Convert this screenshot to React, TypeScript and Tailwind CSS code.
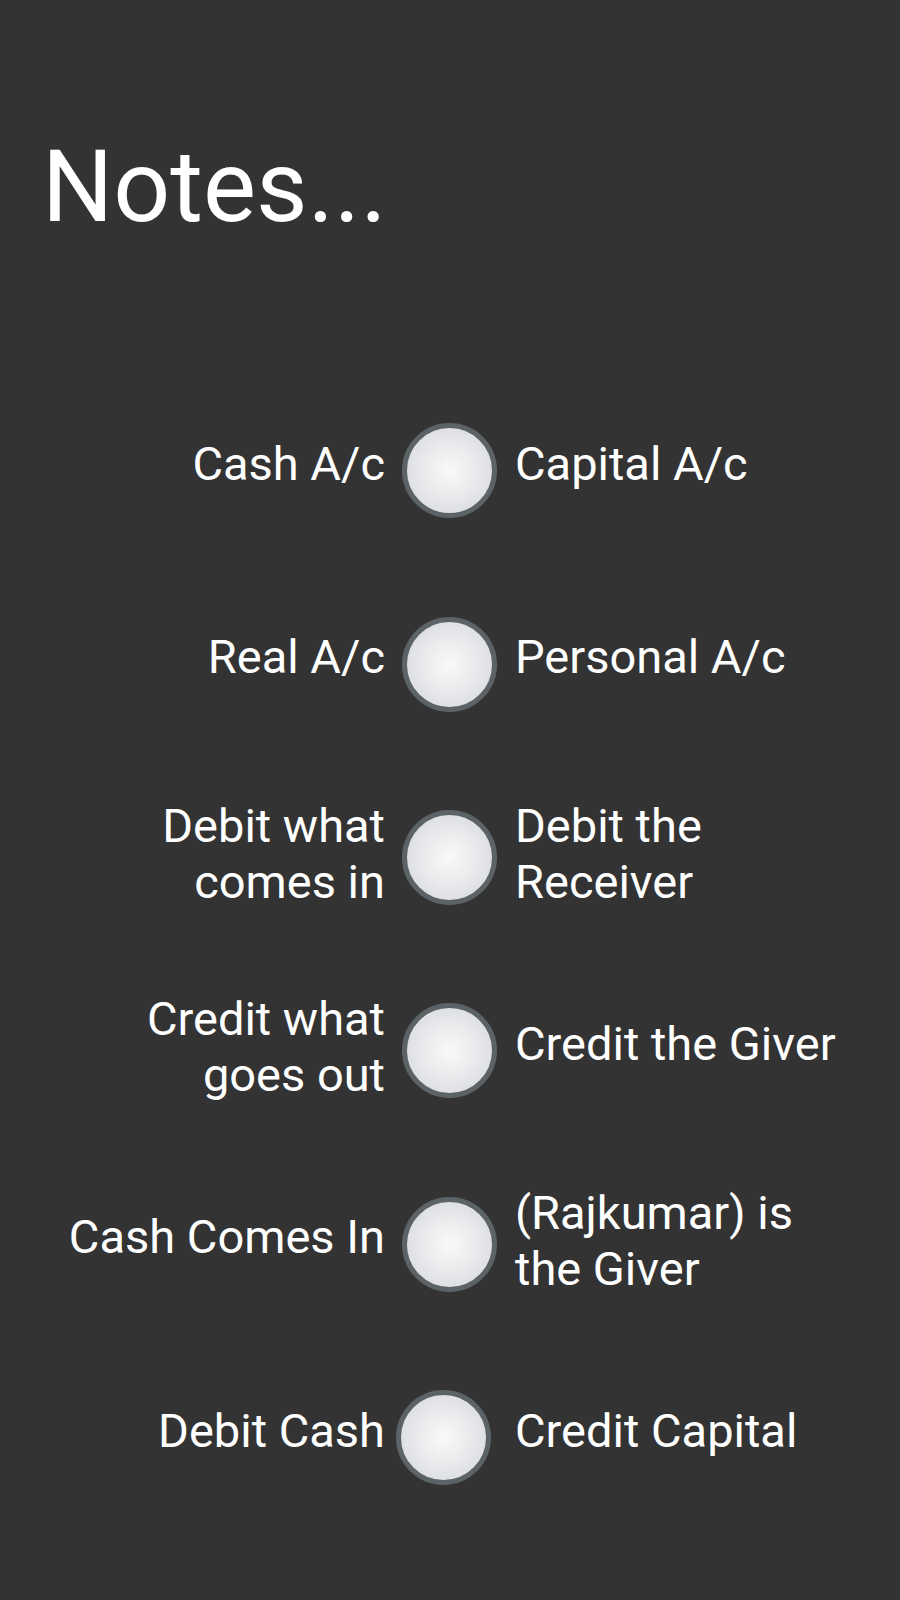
import React from "react";

// two: which side wraps onto a second line (sits a little lower than single lines)
type Note = { left: string; right: string; twoL?: boolean; twoR?: boolean; last?: boolean };

const notes: Note[] = [
  { left: "Cash A/c", right: "Capital A/c" },
  { left: "Real A/c", right: "Personal A/c" },
  { left: "Debit what comes in", right: "Debit the Receiver", twoL: true, twoR: true },
  { left: "Credit what goes out", right: "Credit the Giver", twoL: true },
  { left: "Cash Comes In", right: "(Rajkumar) is the Giver", twoR: true },
  { left: "Debit Cash", right: "Credit Capital", last: true },
];

const Knob = ({ shifted }: { shifted?: boolean }) => (
  <div
    className={
      shifted
        ? "ml-[11px] mr-[24px] w-[95px] h-[95px] shrink-0 rounded-full border-[5px] border-[#5c6367] bg-[radial-gradient(circle,#f9f9fa_0%,#e9eaec_45%,#dfe0e4_70%,#c6c9cc_86%,#80868a_100%)]"
        : "ml-[17px] mr-[18px] w-[95px] h-[95px] shrink-0 rounded-full border-[5px] border-[#5c6367] bg-[radial-gradient(circle,#f9f9fa_0%,#e9eaec_45%,#dfe0e4_70%,#c6c9cc_86%,#80868a_100%)]"
    }
  />
);

export default function App() {
  return (
    <div className="min-h-[1600px] w-full bg-[#333333] text-white font-['Roboto',sans-serif]">
      {/* header */}
      <div className="pt-[128px] pl-[42px]">
        <h1 className="text-[100px] leading-[118px] font-normal">Notes...</h1>
      </div>

      {/* rule rows */}
      <div className="mt-[128px] flex flex-col">
        {notes.map((n, i) => (
          <div key={i} className="h-[193.4px] flex items-center">
            <p
              className={
                n.twoL
                  ? "ml-[55px] w-[330px] shrink-0 text-right text-[47px] leading-[56px] mb-[7px]"
                  : "ml-[55px] w-[330px] shrink-0 text-right text-[47px] leading-[56px] mb-[14px]"
              }
            >
              {n.left}
            </p>
            <Knob shifted={n.last} />
            <p
              className={
                n.twoR
                  ? "w-[340px] shrink-0 text-left text-[47px] leading-[56px] mb-[7px]"
                  : "w-[340px] shrink-0 text-left text-[47px] leading-[56px] mb-[14px]"
              }
            >
              {n.right}
            </p>
          </div>
        ))}
      </div>
    </div>
  );
}
